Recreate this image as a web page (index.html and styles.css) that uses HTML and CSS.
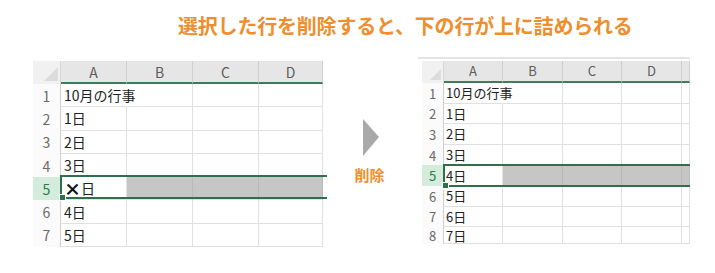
FILE: index.html
```html
<!DOCTYPE html>
<html lang="ja">
<head>
  <meta charset="UTF-8">
  <title>行の削除</title>
  <link rel="stylesheet" href="styles.css">
</head>
<body>

<!-- 見出し -->
<h1 class="title">選択した行を削除すると、下の行が上に詰められる</h1>

<div class="stage">

  <!-- 削除前 -->
  <div class="sheet before">
    <div class="corner"></div>
    <div class="hd">A</div><div class="hd">B</div><div class="hd">C</div><div class="hd">D</div>

    <div class="rn">1</div><div class="c spill">10月の行事</div><div class="c"></div><div class="c"></div><div class="c"></div>
    <div class="rn">2</div><div class="c">1日</div><div class="c"></div><div class="c"></div><div class="c"></div>
    <div class="rn">3</div><div class="c">2日</div><div class="c"></div><div class="c"></div><div class="c"></div>
    <div class="rn">4</div><div class="c">3日</div><div class="c"></div><div class="c"></div><div class="c"></div>
    <div class="rn on">5</div><div class="c"><b class="mark">×</b>日</div><div class="c gray"></div><div class="c gray"></div><div class="c gray"></div>
    <div class="rn">6</div><div class="c">4日</div><div class="c"></div><div class="c"></div><div class="c"></div>
    <div class="rn">7</div><div class="c">5日</div><div class="c"></div><div class="c"></div><div class="c"></div>

    <div class="sel"><span class="handle"></span></div>
  </div>

  <!-- 矢印 -->
  <div class="step">
    <div class="arrow"></div>
    <div class="step-label">削除</div>
  </div>

  <!-- 削除後 -->
  <div class="after-wrap">
    <div class="toolbar"></div>
    <div class="sheet after">
      <div class="corner"></div>
      <div class="hd">A</div><div class="hd">B</div><div class="hd">C</div><div class="hd">D</div><div class="hd"></div>

      <div class="rn">1</div><div class="c spill">10月の行事</div><div class="c"></div><div class="c"></div><div class="c"></div><div class="c"></div>
      <div class="rn">2</div><div class="c">1日</div><div class="c"></div><div class="c"></div><div class="c"></div><div class="c"></div>
      <div class="rn">3</div><div class="c">2日</div><div class="c"></div><div class="c"></div><div class="c"></div><div class="c"></div>
      <div class="rn">4</div><div class="c">3日</div><div class="c"></div><div class="c"></div><div class="c"></div><div class="c"></div>
      <div class="rn on">5</div><div class="c">4日</div><div class="c gray"></div><div class="c gray"></div><div class="c gray"></div><div class="c gray"></div>
      <div class="rn">6</div><div class="c">5日</div><div class="c"></div><div class="c"></div><div class="c"></div><div class="c"></div>
      <div class="rn">7</div><div class="c">6日</div><div class="c"></div><div class="c"></div><div class="c"></div><div class="c"></div>
      <div class="rn">8</div><div class="c">7日</div><div class="c"></div><div class="c"></div><div class="c"></div><div class="c"></div>

      <div class="sel"><span class="handle"></span></div>
    </div>
  </div>

</div>

</body>
</html>
```

FILE: styles.css
```css
/* 全体 */
body {
  margin: 0;
  width: 715px;
  height: 273px;
  overflow: hidden;
  background: #ffffff;
  font-family: "Noto Sans CJK JP", "Noto Sans", sans-serif;
  color: #222;
}

.title {
  margin: 0;
  padding: 12px 0 0 178px;
  font-size: 20px;
  line-height: 28px;
  font-weight: bold;
  color: #ee8e2c;
  letter-spacing: -0.2px;
}

.stage {
  display: flex;
  align-items: flex-start;
  margin-top: 21px;
  padding-left: 33px;
}

/* シート */
.sheet {
  position: relative;
  display: grid;
  background: #fff;
}

.before {
  grid-template-columns: 28px 66px 66px 66px 64px;
  grid-template-rows: 23px repeat(7, 23.3px);
  font-size: 14px;
}

.after {
  grid-template-columns: 22px 59px 60px 59px 60px 8px;
  grid-template-rows: 22px repeat(7, 20.6px) 17px;
  font-size: 13px;
  overflow: hidden;
}

.corner {
  position: relative;
  background: #f1f1f1;
  border-right: 1px solid #d6d6d6;
}

.corner::after {
  content: "";
  position: absolute;
  right: 2px;
  bottom: 3px;
  border-left: 14px solid transparent;
  border-bottom: 14px solid #dcdcdc;
}

.after .corner::after {
  border-left-width: 11px;
  border-bottom-width: 11px;
}

.hd {
  box-sizing: border-box;
  background: #e6e6e6;
  border-right: 1px solid #cfcfcf;
  border-bottom: 2px solid #3f7d59;
  color: #5d5d5d;
  text-align: center;
  line-height: 22px;
}

.after .hd {
  line-height: 20px;
}

.rn {
  box-sizing: border-box;
  background: #fbfbfb;
  border-right: 1px solid #cfcfcf;
  color: #6a6a6a;
  text-align: center;
  display: flex;
  align-items: center;
  justify-content: center;
}

.rn.on {
  background: #d3ecdc;
  color: #2f7a4f;
}

.c {
  box-sizing: border-box;
  border-right: 1px solid #e0e0e0;
  border-bottom: 1px solid #e0e0e0;
  padding-left: 3px;
  display: flex;
  align-items: center;
  white-space: nowrap;
}

.after .c {
  padding-left: 2px;
}

.spill {
  overflow: visible;
  border-right-color: transparent;
  z-index: 1;
}

.c.gray {
  background: #c6c6c6;
  border-right-color: #b9b9b9;
}

.mark {
  font-weight: 900;
  font-size: 17px;
  line-height: 1;
  color: #111;
}

/* 選択範囲 */
.sel {
  position: absolute;
  left: 27px;
  right: -4px;
  top: 114px;
  height: 24px;
  border: 2px solid #2f6f4a;
  border-right: none;
  box-sizing: border-box;
  pointer-events: none;
}

.after .sel {
  left: 21px;
  top: 103px;
  height: 23px;
}

.handle {
  position: absolute;
  left: -3px;
  bottom: -4px;
  width: 5px;
  height: 5px;
  background: #2f6f4a;
  border: 1px solid #fff;
}

/* 矢印 */
.step {
  box-sizing: border-box;
  width: 99px;
  padding: 58px 6px 0 0;
  display: flex;
  flex-direction: column;
  align-items: center;
}

.arrow {
  width: 0;
  height: 0;
  margin-left: 3px;
  border-left: 16px solid #a9a9a9;
  border-top: 18px solid transparent;
  border-bottom: 19px solid transparent;
}

.step-label {
  margin-top: 10px;
  font-size: 15px;
  font-weight: bold;
  color: #ee8e2c;
  line-height: 18px;
}

/* 削除後 */
.after-wrap {
  margin-top: -4px;
}

.toolbar {
  height: 2px;
  margin: 0 0 2px -4px;
  width: 272px;
  background: #e4e4e4;
}
```
